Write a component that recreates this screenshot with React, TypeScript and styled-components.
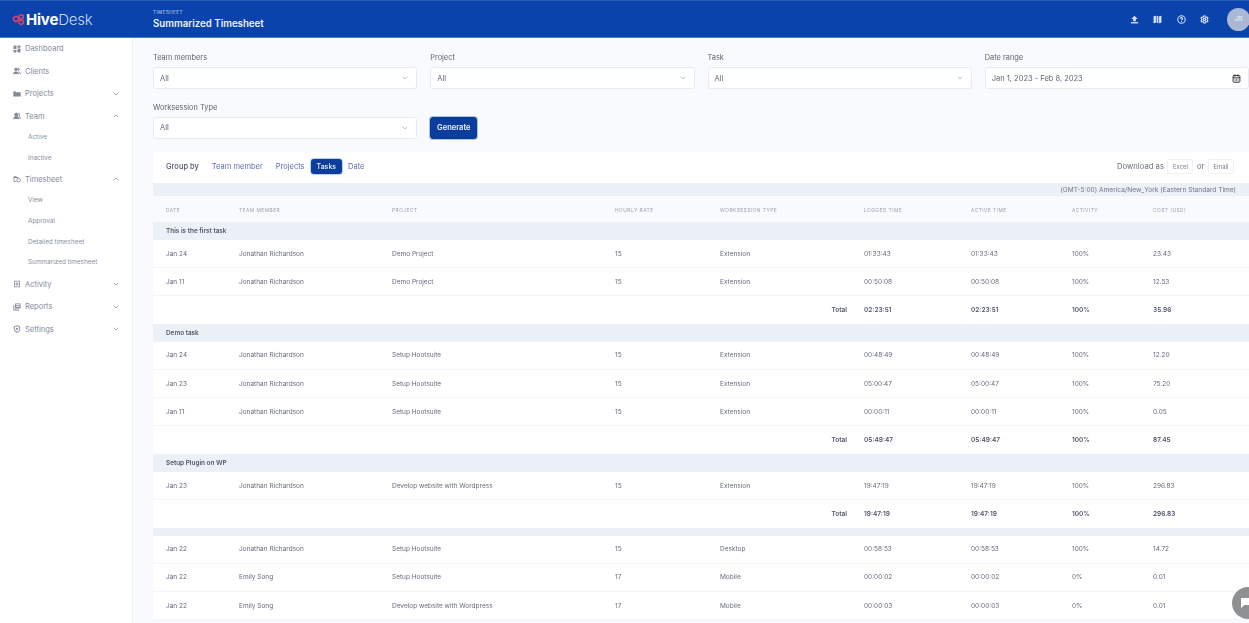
import { createGlobalStyle, styled } from 'styled-components'
import { CalendarDays, ChevronDown, ChevronUp, CircleHelp, Settings, Users, UsersRound } from 'lucide-react'
import type { ReactNode } from 'react'

const GlobalStyle = createGlobalStyle`
  html, body { margin: 0; padding: 0; height: 100%; overflow: hidden; }
  body { font-family: Inter, "Liberation Sans", sans-serif; background: #f8fafd; color: #555b6e; }
  * { box-sizing: border-box; }
`

// the reference is a soft, upscaled capture
const Page = styled.div`
  position: relative;
  width: 1249px;
  height: 623px;
  overflow: hidden;
  display: flex;
  flex-direction: column;
  filter: blur(0.35px);
`

const Header = styled.header`
  flex: 0 0 38px;
  display: flex;
  align-items: center;
  background: #0a43ab;
  border-top: 1px solid #2a5cba;
  border-bottom: 1px solid #4f7cd0;
  color: #fff;
`

const Brand = styled.div`
  width: 153px;
  padding-left: 12px;
  display: flex;
  align-items: center;
  gap: 1px;
  font-size: 15px;
  font-weight: 700;
  letter-spacing: -0.2px;
`

const BrandLight = styled.span`
  font-weight: 300;
  color: #c9d8f5;
  margin-left: -1px;
`

const Titles = styled.div`
  flex: 1;
  display: flex;
  flex-direction: column;
  gap: 3px;
  padding-top: 1px;
`

const Eyebrow = styled.div`
  font-size: 4.5px;
  letter-spacing: 0.5px;
  color: #c3d2ee;
`

const PageTitle = styled.div`
  font-size: 9.7px;
  font-weight: 600;
  color: #eef3fc;
`

const HeaderIcons = styled.div`
  display: flex;
  align-items: center;
  gap: 14.6px;
  color: #d6e2f8;
`

const Avatar = styled.div`
  width: 23px;
  height: 23px;
  margin: 0 -1px 0 3px;
  border-radius: 50%;
  background: #a9b8d4;
  color: #dfe6f3;
  font-size: 6.5px;
  font-weight: 600;
  display: flex;
  align-items: center;
  justify-content: center;
`

const Body = styled.div`
  flex: 1;
  display: flex;
  min-height: 0;
`

const Sidebar = styled.nav`
  flex: 0 0 133px;
  margin-top: -0.5px;
  background: #fff;
  border-right: 1px solid #eef1f6;
  display: flex;
  flex-direction: column;
`

const NavItem = styled.div`
  height: 22.5px;
  padding: 0 12px 0 13px;
  display: flex;
  align-items: center;
  gap: 4px;
  font-size: 7.5px;
  color: #858a9b;
  svg { flex: none; }
`

const NavLabel = styled.span`
  flex: 1;
`

const SubList = styled.div`
  margin-top: -1px;
`

const SubItem = styled.div`
  height: 20.8px;
  padding-left: 28px;
  display: flex;
  align-items: center;
  font-size: 6.4px;
  color: #8a8fa2;
`

const Main = styled.main`
  flex: 1;
  min-width: 0;
  padding: 14px 0 0 20px;
`

const Filters = styled.div`
  display: grid;
  grid-template-columns: repeat(4, 264.25px);
  column-gap: 13px;
  row-gap: 12.5px;
`

const Field = styled.div`
  display: flex;
  flex-direction: column;
  gap: 4px;
`

const Label = styled.label`
  height: 11px;
  line-height: 11px;
  font-size: 7.4px;
  color: #5f6475;
`

const Select = styled.div`
  height: 22px;
  padding: 0 7px 0 6px;
  background: #fff;
  border: 1px solid #e6eaf1;
  border-radius: 3px;
  display: flex;
  align-items: center;
  justify-content: space-between;
  font-size: 7.5px;
  color: #60667a;
`

const GenerateCell = styled.div`
  display: flex;
  align-items: flex-end;
`

const GenerateButton = styled.button`
  width: 47px;
  height: 22px;
  padding: 0;
  border: 1px solid #0a3a94;
  border-radius: 3px;
  background: #0a3d9c;
  box-shadow: 0 0 0 1px #a9c2ec;
  color: #eef3fc;
  font: 600 7.5px Inter, "Liberation Sans", sans-serif;
`

const Card = styled.section`
  margin-top: 13.5px;
  background: #fff;
`

const GroupBar = styled.div`
  height: 31px;
  padding: 0 15px 2px 13px;
  display: flex;
  align-items: center;
  font-size: 7.5px;
`

const GroupLabel = styled.span`
  font-weight: 500;
  color: #50556a;
  margin-right: 6.5px;
`

const GroupTab = styled.span<{ $active?: boolean }>`
  height: 15px;
  padding: 0 ${(p) => (p.$active ? '5.5px' : '6.5px')};
  border-radius: 3px;
  display: flex;
  align-items: center;
  background: ${(p) => (p.$active ? '#0a3d9c' : 'transparent')};
  box-shadow: ${(p) => (p.$active ? '0 0 0 1px #bcd0f0' : 'none')};
  color: ${(p) => (p.$active ? '#f1f5fc' : '#5e6ea5')};
  font-weight: ${(p) => (p.$active ? 500 : 400)};
  font-size: ${(p) => (p.$active ? '7px' : '7.5px')};
`

const DownloadBox = styled.div`
  margin-left: auto;
  display: flex;
  align-items: center;
  gap: 3.5px;
  font-size: 7.7px;
  color: #6a7082;
`

const DownloadButton = styled.span`
  width: 26px;
  height: 15px;
  border: 1px solid #eef0f5;
  border-radius: 2px;
  display: flex;
  align-items: center;
  justify-content: center;
  font-size: 6px;
  color: #7d8293;
`

const ZoneBar = styled.div`
  height: 13px;
  padding-right: 13px;
  background: #ecf1f8;
  display: flex;
  align-items: center;
  justify-content: flex-end;
  font-size: 6.6px;
  color: #6d7386;
`

const Row = styled.div`
  display: grid;
  grid-template-columns: 73px 153px 223px 105px 144px 107px 101px 81px 1fr;
  padding-left: 13px;
  align-items: center;
`

const HeadRow = styled(Row)`
  height: 26px;
  padding-top: 1px;
  background: #f9fafd;
  font-size: 4.8px;
  letter-spacing: 0.5px;
  color: #9aa0b1;
`

const DataRow = styled(Row)`
  height: 28.2px;
  border-bottom: 1px solid #f3f5f9;
  font-size: 6.5px;
  color: #666b7d;
`

const TotalRow = styled(Row)`
  height: 27.5px;
  font-size: 6.5px;
  font-weight: 600;
  color: #50556a;
`

const TotalLabel = styled.span`
  grid-column: 1 / 6;
  text-align: right;
  padding-right: 17px;
`

const GroupRow = styled.div<{ $slim?: boolean }>`
  height: ${(p) => (p.$slim ? '8px' : '18px')};
  padding-left: 13px;
  background: #ecf1f8;
  display: flex;
  align-items: center;
  font-size: 6.4px;
  font-weight: 600;
  color: #50556a;
`

const ChatBubble = styled.div`
  position: absolute;
  left: 1232px;
  top: 587px;
  width: 32px;
  height: 32px;
  border-radius: 50%;
  background: #8f9092;
  color: #fff;
  display: flex;
  align-items: center;
  padding-left: 8px;
`

const columns = ['Date', 'Team member', 'Project', 'Hourly rate', 'Worksession type', 'Logged time', 'Active time', 'Activity', 'Cost (USD)']

type Entry = [string, string, string, string, string, string, string, string]

const groups: { title: string; rows: Entry[]; total?: string[] }[] = [
  {
    title: 'This is the first task',
    rows: [
      ['Jan 24', 'Jonathan Richardson', 'Demo Project', '15', 'Extension', '01:33:43', '100%', '23.43'],
      ['Jan 11', 'Jonathan Richardson', 'Demo Project', '15', 'Extension', '00:50:08', '100%', '12.53'],
    ],
    total: ['02:23:51', '100%', '35.96'],
  },
  {
    title: 'Demo task',
    rows: [
      ['Jan 24', 'Jonathan Richardson', 'Setup Hootsuite', '15', 'Extension', '00:48:49', '100%', '12.20'],
      ['Jan 23', 'Jonathan Richardson', 'Setup Hootsuite', '15', 'Extension', '05:00:47', '100%', '75.20'],
      ['Jan 11', 'Jonathan Richardson', 'Setup Hootsuite', '15', 'Extension', '00:00:11', '100%', '0.05'],
    ],
    total: ['05:49:47', '100%', '87.45'],
  },
  {
    title: 'Setup Plugin on WP',
    rows: [['Jan 23', 'Jonathan Richardson', 'Develop website with Wordpress', '15', 'Extension', '19:47:19', '100%', '296.83']],
    total: ['19:47:19', '100%', '296.83'],
  },
  {
    title: '',
    rows: [
      ['Jan 22', 'Jonathan Richardson', 'Setup Hootsuite', '15', 'Desktop', '00:58:53', '100%', '14.72'],
      ['Jan 22', 'Emily Song', 'Setup Hootsuite', '17', 'Mobile', '00:00:02', '0%', '0.01'],
      ['Jan 22', 'Emily Song', 'Develop website with Wordpress', '17', 'Mobile', '00:00:03', '0%', '0.01'],
    ],
  },
]

function Glyph({ children, size = 8 }: { children: ReactNode; size?: number }) {
  return (
    <svg width={size} height={size} viewBox="0 0 8 8" fill="currentColor" stroke="none">
      {children}
    </svg>
  )
}

const DashboardIcon = () => (
  <Glyph>
    <rect x="0.5" y="0.5" width="3" height="3.6" rx="0.4" />
    <rect x="4.5" y="0.5" width="3" height="2.2" rx="0.4" />
    <rect x="0.5" y="5" width="3" height="2.5" rx="0.4" />
    <rect x="4.5" y="3.6" width="3" height="3.9" rx="0.4" />
  </Glyph>
)

const FolderIcon = () => (
  <Glyph>
    <path d="M0.3 1.4h2.6l0.8 0.9h4v4.3H0.3z" />
  </Glyph>
)

const TimesheetIcon = () => (
  <Glyph>
    <path d="M0.6 1.2h2.5l0.7 0.8h1.6v1H1.4v3h2v0.8H0.6z" />
    <circle cx="5.6" cy="5.2" r="1.9" fill="none" stroke="currentColor" strokeWidth="0.8" />
  </Glyph>
)

const ActivityIcon = () => (
  <Glyph>
    <path d="M1 0.7h6v6.6H1zM1.8 1.5v5h4.4v-5zM3.6 2.3h0.8v1.3h1.2v0.8H4.4v1.3H3.6V4.4H2.4V3.6h1.2z" fillRule="evenodd" />
  </Glyph>
)

const ReportsIcon = () => (
  <Glyph>
    <path d="M2 0.5h5.6v5H2zM2.8 1.3v1h4v-1zM2.8 3v.7h4V3z" fillRule="evenodd" />
    <path d="M0.4 2h0.9v4.4h4.8v1.1H0.4z" />
  </Glyph>
)

const SettingsIcon = () => (
  <Glyph>
    <path d="M4 0.3 7.2 1.4v2.7C7.2 6 5.6 7.2 4 7.8 2.4 7.2 0.8 6 0.8 4.1V1.4zM4 1.3 1.7 2.1v2C1.7 5.4 2.8 6.3 4 6.8 5.2 6.3 6.3 5.4 6.3 4.1v-2z" fillRule="evenodd" />
    <circle cx="4" cy="3.8" r="1.1" />
  </Glyph>
)

const navTop: [ReactNode, string, 'down' | 'up' | null, string[]][] = [
  [<DashboardIcon />, 'Dashboard', null, []],
  [<Users size={8} strokeWidth={2.5} fill="currentColor" />, 'Clients', null, []],
  [<FolderIcon />, 'Projects', 'down', []],
  [<UsersRound size={8} strokeWidth={2.5} fill="currentColor" />, 'Team', 'up', ['Active', 'Inactive']],
  [<TimesheetIcon />, 'Timesheet', 'up', ['View', 'Approval', 'Detailed timesheet', 'Summarized timesheet']],
  [<ActivityIcon />, 'Activity', 'down', []],
  [<ReportsIcon />, 'Reports', 'down', []],
  [<SettingsIcon />, 'Settings', 'down', []],
]

function LogoMark() {
  return (
    <svg width="13" height="13" viewBox="0 0 13 13" fill="none" stroke="#d8406a" strokeWidth="1.6">
      <path d="M4 3.2 6.4 4.6v2.8L4 8.8 1.6 7.4V4.6z" />
      <path d="M9.2 1.6 11.2 2.8v2.4L9.2 6.4 7.2 5.2V2.8z" />
      <path d="M9.2 6.8 11.2 8v2.4l-2 1.2-2-1.2V8z" />
    </svg>
  )
}

const UploadGlyph = () => (
  <Glyph size={9}>
    <path d="M4 0.6 6.8 3.6H5.2V5.6H2.8V3.6H1.2z" />
    <rect x="0.8" y="6.3" width="6.4" height="1.2" />
  </Glyph>
)

const MapGlyph = () => (
  <Glyph size={9}>
    <path d="M0.5 1.2 2.6 0.7V6.8L0.5 7.3zM3.2 0.7 4.8 1.2V7.3L3.2 6.8zM5.4 1.2 7.5 0.7V6.8L5.4 7.3z" />
  </Glyph>
)

function Dropdown({ value }: { value: string }) {
  return (
    <Select>
      {value}
      <ChevronDown size={8} color="#9aa0b1" />
    </Select>
  )
}

export default function App() {
  return (
    <Page>
      <GlobalStyle />
      <Header>
        <Brand>
          <LogoMark />
          <span>Hive</span>
          <BrandLight>Desk</BrandLight>
        </Brand>
        <Titles>
          <Eyebrow>TIMESHEET</Eyebrow>
          <PageTitle>Summarized Timesheet</PageTitle>
        </Titles>
        <HeaderIcons>
          <UploadGlyph />
          <MapGlyph />
          <CircleHelp size={9} strokeWidth={2.8} />
          <Settings size={9} strokeWidth={3.2} />
          <Avatar>JR</Avatar>
        </HeaderIcons>
      </Header>
      <Body>
        <Sidebar>
          {navTop.map(([icon, label, chevron, subs]) => (
            <div key={label}>
              <NavItem>
                {icon}
                <NavLabel>{label}</NavLabel>
                {chevron === 'down' && <ChevronDown size={8} />}
                {chevron === 'up' && <ChevronUp size={8} />}
              </NavItem>
              {subs.length > 0 && (
                <SubList>
                  {subs.map((s) => (
                    <SubItem key={s}>{s}</SubItem>
                  ))}
                </SubList>
              )}
            </div>
          ))}
        </Sidebar>
        <Main>
          <Filters>
            <Field>
              <Label>Team members</Label>
              <Dropdown value="All" />
            </Field>
            <Field>
              <Label>Project</Label>
              <Dropdown value="All" />
            </Field>
            <Field>
              <Label>Task</Label>
              <Dropdown value="All" />
            </Field>
            <Field>
              <Label>Date range</Label>
              <Select>
                Jan 1, 2023 - Feb 8, 2023
                <CalendarDays size={9} color="#333" strokeWidth={2.5} />
              </Select>
            </Field>
            <Field>
              <Label>Worksession Type</Label>
              <Dropdown value="All" />
            </Field>
            <GenerateCell>
              <GenerateButton>Generate</GenerateButton>
            </GenerateCell>
          </Filters>
          <Card>
            <GroupBar>
              <GroupLabel>Group by</GroupLabel>
              <GroupTab>Team member</GroupTab>
              <GroupTab>Projects</GroupTab>
              <GroupTab $active>Tasks</GroupTab>
              <GroupTab>Date</GroupTab>
              <DownloadBox>
                Download as
                <DownloadButton>Excel</DownloadButton>
                or
                <DownloadButton>Email</DownloadButton>
              </DownloadBox>
            </GroupBar>
            <ZoneBar>(GMT-5:00) America/New_York (Eastern Standard Time)</ZoneBar>
            <HeadRow>
              {columns.map((c) => (
                <span key={c}>{c.toUpperCase()}</span>
              ))}
            </HeadRow>
            {groups.map((g, i) => (
              <div key={i}>
                <GroupRow $slim={!g.title}>{g.title}</GroupRow>
                {g.rows.map((r, j) => (
                  <DataRow key={j}>
                    <span>{r[0]}</span>
                    <span>{r[1]}</span>
                    <span>{r[2]}</span>
                    <span>{r[3]}</span>
                    <span>{r[4]}</span>
                    <span>{r[5]}</span>
                    <span>{r[5]}</span>
                    <span>{r[6]}</span>
                    <span>{r[7]}</span>
                  </DataRow>
                ))}
                {g.total && (
                  <TotalRow>
                    <TotalLabel>Total</TotalLabel>
                    <span>{g.total[0]}</span>
                    <span>{g.total[0]}</span>
                    <span>{g.total[1]}</span>
                    <span>{g.total[2]}</span>
                  </TotalRow>
                )}
              </div>
            ))}
          </Card>
        </Main>
      </Body>
      <ChatBubble>
        <svg width="14" height="13" viewBox="0 0 14 13" fill="currentColor">
          <path d="M1 1h10v7H4.5L1 11z" />
        </svg>
      </ChatBubble>
    </Page>
  )
}
